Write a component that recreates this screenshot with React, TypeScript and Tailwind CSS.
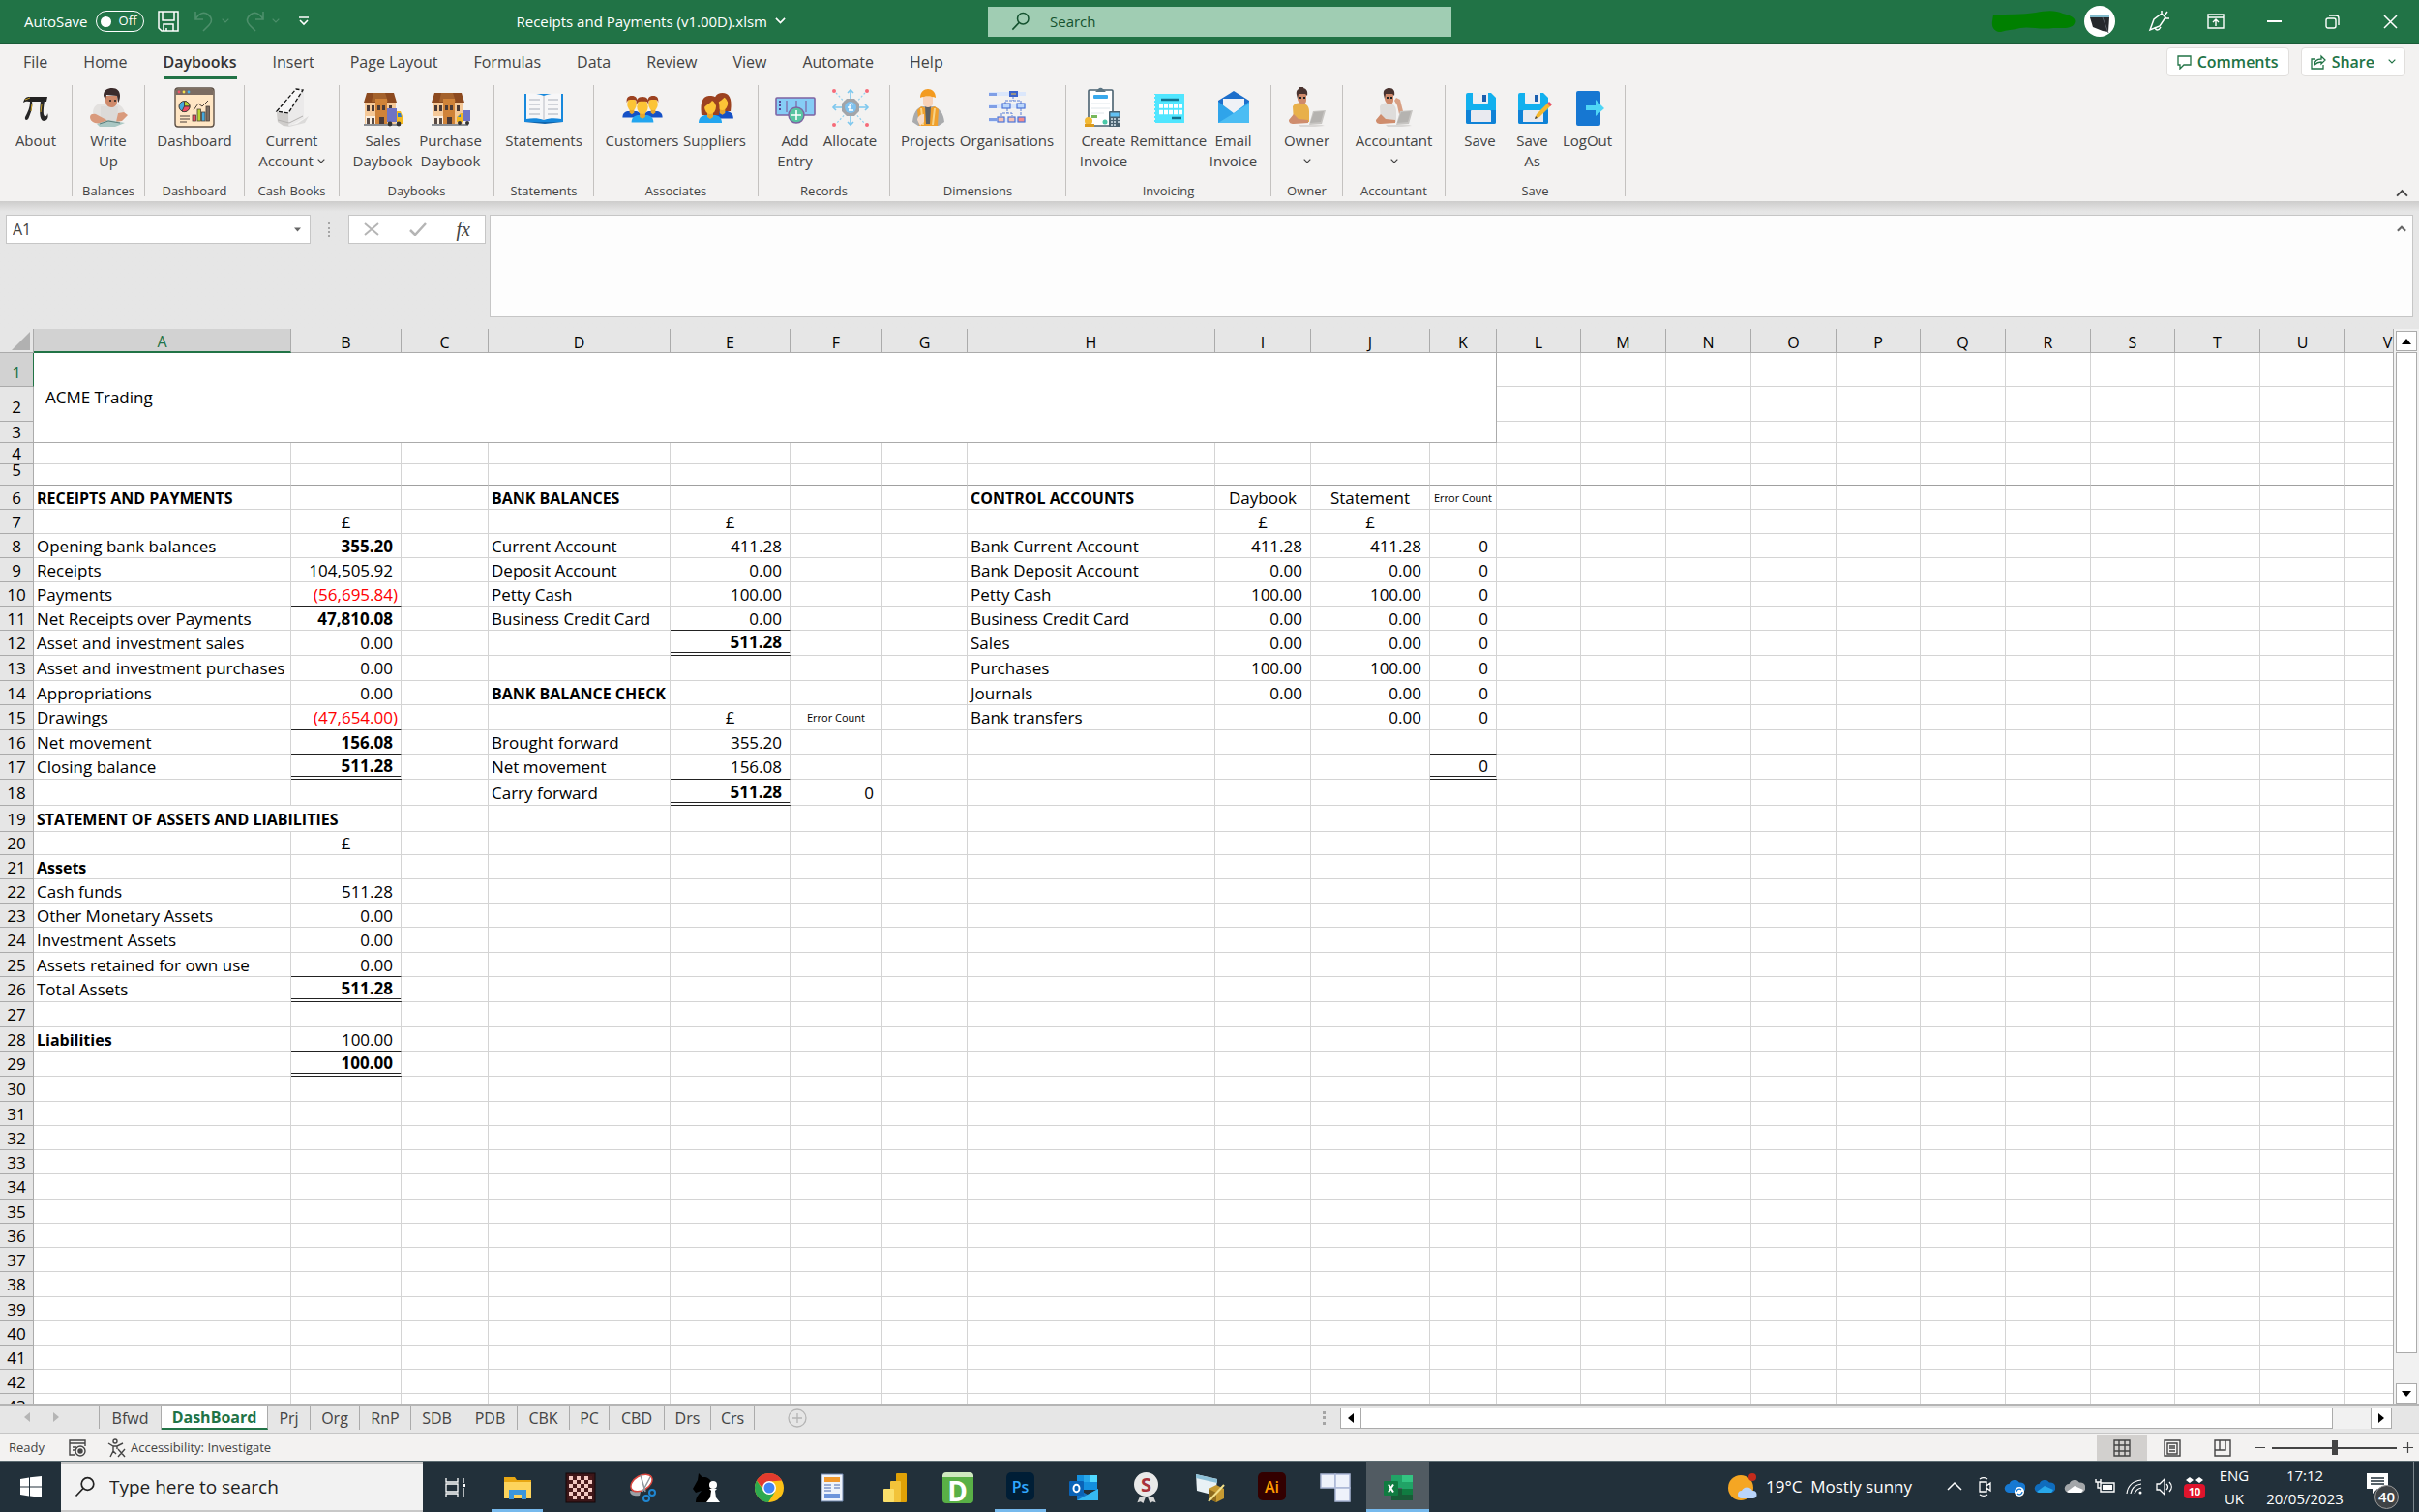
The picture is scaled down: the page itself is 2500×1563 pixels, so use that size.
import type { ReactNode } from 'react';
import clsx from 'clsx';

/* ---------- small glyphs ---------- */

function Chevron({ className, up }: { className?: string; up?: boolean }) {
  return (
    <svg viewBox="0 0 12 8" className={clsx('fill-none stroke-current', className)} strokeWidth="1.8">
      <path d={up ? 'M1 7l5-5 5 5' : 'M1 1l5 5 5-5'} />
    </svg>
  );
}

function Arrow({ dir, small }: { dir: 'up' | 'down' | 'left' | 'right'; small?: boolean }) {
  const d = { up: 'M5 2l5 6H0z', down: 'M0 2h10L5 8z', left: 'M8 0v10L2 5z', right: 'M2 0l6 5-6 5z' }[dir];
  return (
    <svg viewBox="0 0 10 10" className={clsx('fill-current', small ? 'size-[7px]' : 'size-[10px]')}>
      <path d={d} />
    </svg>
  );
}

function Magnifier({ className }: { className?: string }) {
  return (
    <svg viewBox="0 0 22 22" className={clsx('fill-none stroke-current', className)} strokeWidth="1.7">
      <circle cx="13.5" cy="8" r="6.3" />
      <path d="M9 12.5L1.5 20.5" />
    </svg>
  );
}

/* ---------- ribbon drawings, all on a 42 x 42 box ---------- */

function Pic({ children }: { children: ReactNode }) {
  return (
    <svg viewBox="0 0 42 42" className="size-[42px] shrink-0">
      {children}
    </svg>
  );
}

const PiIcon = () => (
  <Pic>
    <path d="M8 16c2-7 5-6 9-6h16l-1 5H17c-4 0-6-1-9 1z" fill="#222" />
    <path d="M17 14c1 8-1 12-3 17-1 4-5 4-4 0 3-6 5-9 5-17zM26 14h4c-1 7-2 14 0 16 2 1 3-1 3-3 2 5-1 8-4 8-5-1-4-12-3-21z" fill="#262626" />
    <path d="M10 13l5-2M17 17l-1 8M27 18l-1 8" stroke="#c9a227" strokeWidth="1" />
  </Pic>
);

const WriterIcon = () => (
  <Pic>
    <path d="M5 27c0-7 4-10 10-10h11c7 0 11 4 12 11l-4 3H9z" fill="#e3e1df" />
    <path d="M13 20h18l-1 15H13z" fill="#dcdad8" />
    <path d="M2 31c0-3 3-4 6-3l13 7-2 4-12-2c-3-1-5-3-5-6zM31 27l6-1 4 3-6 6-6 1z" fill="#d99a7c" />
    <path d="M18 9h12v6c0 4-3 6-6 6s-6-3-6-6z" fill="#cf8a6b" />
    <path d="M16 9c0-6 4-8 9-8s8 3 8 8c0 3-1 6-2 7l-1-7-11-1-1 5z" fill="#3a2b2b" />
    <path d="M22 14h2M27 14h2" stroke="#222" strokeWidth="1.500" />
    <path d="M9 38l12-4 17 3-10 4H12z" fill="#a9c7c3" />
    <path d="M12 38l9-3 12 2" stroke="#5e7f7c" fill="none" />
  </Pic>
);

const DashboardIcon = () => (
  <Pic>
    <rect x="1" y="1" width="40" height="40" rx="3" fill="#ffe6c4" stroke="#5d5147" strokeWidth="1.4" />
    <path d="M1.500 8V4a2.500 2.500 0 012.500-2.500h34A2.500 2.500 0 0140.500 4v4z" fill="#7b6c61" />
    <circle cx="5" cy="5" r="1.400" fill="#f25268" />
    <circle cx="10" cy="5" r="1.400" fill="#f3e04d" />
    <circle cx="15" cy="5" r="1.400" fill="#45b5e8" />
    <circle cx="10.500" cy="20" r="5.500" fill="#45a9dd" stroke="#4a3f38" />
    <path d="M10.500 20V14.500A5.500 5.500 0 0116 20z" fill="#b9d432" stroke="#4a3f38" />
    <path d="M10.500 20H16A5.500 5.500 0 018 25z" fill="#ef4b63" stroke="#4a3f38" />
    <rect x="19" y="29" width="3.500" height="6" fill="#ef4b63" stroke="#4a3f38" strokeWidth=".8" />
    <rect x="24" y="23" width="3.500" height="12" fill="#b9d432" stroke="#4a3f38" strokeWidth=".8" />
    <rect x="28.500" y="26" width="3.500" height="9" fill="#45a9dd" stroke="#4a3f38" strokeWidth=".8" />
    <rect x="33" y="20" width="3.500" height="15" fill="#7b6c61" stroke="#4a3f38" strokeWidth=".8" />
    <path d="M20 24l5-7 4 3 6-6M6 30h10M6 33h10M6 36h7" stroke="#4a3f38" fill="none" />
  </Pic>
);

const TillIcon = () => (
  <Pic>
    <path d="M12 41l14-3 12-8-4 7-16 4z" fill="#dcdbda" />
    <path d="M5 26L25 2l8 1v29l-15 8h-6l-6-4z" fill="#e2e1e0" />
    <path d="M5 26l12 2v12h-5l-6-4z" fill="#cfcdcb" />
    <path d="M17 28L33 4v28l-15 8z" fill="#ebeaea" />
    <path d="M5 25L25 2l7 1-15 24z" fill="#f7f7f7" stroke="#111" strokeWidth="1.300" strokeDasharray="4 2" />
    <path d="M6 34l12 3 14-7" stroke="#b3b1af" fill="none" />
  </Pic>
);

function ShopIcon({ small }: { small?: boolean }) {
  return (
    <Pic>
      <path d="M4 6h28l3 10H1z" fill="#8c4a1f" />
      <path d="M11 6h12l3 9H9z" fill="#a4622c" />
      <rect x="2" y="16" width="32" height="23" fill="#f5c998" />
      <rect x="13" y="12" width="12" height="27" fill="#d08338" />
      <path d="M4 19h3v6H4zM9 19h3v6H9zM15 19h3v5h-3zM20 19h3v5h-3zM27 19h3v6h-3zM17 31h5v8h-5z" fill="#4a3a36" />
      <path d="M3 30h10v8H3z" fill="#fbeede" />
      <path d="M4 32h3v6H4zM9 32h3v6H9z" fill="#584b45" />
      <path d="M1 38h38v2H1z" fill="#8b8f94" />
      {small ? (
        <g>
          <rect x="33" y="24" width="8" height="11" fill="#6f74c4" />
          <path d="M27 31l4-4h2v9h-6z" fill="#f3b91f" />
          <path d="M28 31l3-3v3z" fill="#2f79c8" />
          <circle cx="30" cy="37" r="2" fill="#333" />
          <circle cx="38" cy="37" r="2" fill="#333" />
        </g>
      ) : (
        <g>
          <rect x="25" y="22" width="10" height="14" fill="#6f74c4" />
          <path d="M35 25h4l2 5v8h-6z" fill="#f3b91f" />
          <path d="M36 27h3l1 4h-4z" fill="#2f79c8" />
          <circle cx="28" cy="38" r="2.400" fill="#333" />
          <circle cx="37" cy="38" r="2.400" fill="#333" />
        </g>
      )}
    </Pic>
  );
}

const BookIcon = () => (
  <Pic>
    <path d="M1 7h40v29H1z" fill="#1688dc" />
    <path d="M21 9c-5-2-12-3-18-2v26c6-1 13-1 18 1 5-2 12-2 18-1V7c-6-1-13 0-18 2z" fill="#f7f7f8" />
    <path d="M21 9v25" stroke="#b9bcc4" />
    <path d="M6 13h11M6 18h11M6 23h11M6 28h11M25 13h11M25 18h11M25 23h11M25 28h11" stroke="#c3c7ce" strokeWidth="1.400" />
    <path d="M1 36h40l-19 2z" fill="#0f65ad" />
  </Pic>
);

function Bust({ x, y, s, shirt, long }: { x: number; y: number; s: number; shirt: string; long?: boolean }) {
  return (
    <g transform={`translate(${x} ${y}) scale(${s})`}>
      {long && <path d="M1 20C-1 5 3 0 10 0s11 5 9 20z" fill="#9c4220" />}
      <path d="M-2 28c0-6 4-8 8-8h8c4 0 8 2 8 8z" fill={shirt} />
      <path d="M7 16h6v6l-3 2-3-2z" fill="#e8a62c" />
      <ellipse cx="10" cy="11" rx="6" ry="8" fill="#fcc436" />
      <path
        d={long ? 'M3 13C2 4 5 1 10 1s8 3 7 12c-1-4-3-7-5-8-2 3-6 4-9 8z' : 'M3.500 9C2.500 3 5 0 10 0s7.500 3 6.500 9C16 6 15 5 13 5H8C5 5 4 7 3.500 9z'}
        fill="#9c4220"
      />
    </g>
  );
}

const CustomersIcon = () => (
  <Pic>
    <Bust x={2} y={9} s={0.800} shirt="#1551c6" />
    <Bust x={24} y={9} s={0.800} shirt="#1551c6" />
    <Bust x={11.500} y={10} s={0.950} shirt="#22a5ef" />
  </Pic>
);

const SuppliersIcon = () => (
  <Pic>
    <Bust x={19} y={6} s={0.950} shirt="#1551c6" long />
    <Bust x={6} y={9} s={1} shirt="#22a5ef" long />
  </Pic>
);

const AddEntryIcon = () => (
  <Pic>
    <rect x="1" y="11" width="40" height="18" rx="1" fill="#86cdf6" stroke="#7e63a2" strokeWidth="1.600" />
    <path d="M12 14v12M22 14v12M32 14v12" stroke="#7e63a2" strokeWidth="1.200" />
    <path d="M5 14v12" stroke="#55489a" strokeWidth="2" strokeDasharray="2 2" />
    <circle cx="22" cy="29" r="8" fill="#57c4a1" stroke="#7e63a2" strokeWidth="1.400" />
    <path d="M22 24v10M17 29h10" stroke="#fff" strokeWidth="1.600" />
  </Pic>
);

const AllocateIcon = () => (
  <Pic>
    <path d="M6 6l30 32M36 6L6 38" stroke="#8fd0ef" strokeWidth="1.200" strokeDasharray="2 2" />
    <path d="M21 12V4M21 30v8M12 21H4M30 21h8" stroke="#7cc7ee" strokeWidth="1.600" />
    <path d="M18 6l3-3 3 3M18 36l3 3 3-3M6 18l-3 3 3 3M36 18l3 3-3 3" fill="none" stroke="#7cc7ee" strokeWidth="1.600" />
    <path d="M17 12h8l5 5v8l-5 5h-8l-5-5v-8z" fill="#a2a4a8" />
    <circle cx="21" cy="21" r="6" fill="#7fc1ee" />
    <path d="M24 18c-3-2-4 0-4 2v4h-1 5M18 21h4" stroke="#fff" fill="none" strokeWidth="1.300" />
    <g fill="#f66a78">
      <circle cx="4" cy="4" r="2" />
      <circle cx="38" cy="4" r="2" />
      <circle cx="4" cy="39" r="2" />
      <circle cx="38" cy="39" r="2" />
    </g>
  </Pic>
);

const ProjectsIcon = () => (
  <Pic>
    <path d="M5 36c1-9 4-14 10-16h12c6 2 10 7 11 16l-6 4H11z" fill="#a9abad" />
    <path d="M14 20l7 3 7-3 4 3-1 17H12l-2-16z" fill="#f0a02c" />
    <path d="M18 20h6l-1 18h-4z" fill="#5b6066" />
    <path d="M14 22l2 17M28 22l-2 17" stroke="#f7d48a" strokeWidth="2" />
    <path d="M16 10h10v8c-2 4-8 4-10 0z" fill="#f8d2b8" />
    <path d="M13 11c0-6 4-9 8-9s8 3 8 9c-5-2-11-2-16 0z" fill="#f39a1f" />
    <path d="M10 34c0-3 3-6 7-6v8l-4 4z" fill="#f6dcc8" />
  </Pic>
);

const OrganisationsIcon = () => (
  <Pic>
    <path d="M2 5h38v4H2zM2 18h38v4H2zM2 32h38v4H2z" fill="#dbe7fb" />
    <path d="M2 6h8v3H2zM2 19h8v3H2zM2 32h8v3H2z" fill="#7f9fe6" />
    <path d="M27 9v5M19 18v-4h16v4M21 22v5M15 30v-3h11v3M35 22v8" fill="none" stroke="#5b7fd6" strokeDasharray="3 1" />
    <rect x="23" y="4" width="9" height="6" fill="#3a63cc" />
    <path d="M25 7h5" stroke="#f5c445" />
    <g stroke="#4c74d8" strokeWidth="1.200">
      <rect x="16" y="17" width="8" height="5" fill="#bcd7fb" />
      <rect x="31" y="17" width="8" height="5" fill="#bcd7fb" />
      <rect x="11" y="31" width="7" height="5" fill="#f8c3b4" />
      <rect x="22" y="31" width="7" height="5" fill="#f8c3b4" />
      <rect x="32" y="31" width="7" height="5" fill="#f48d8d" />
    </g>
  </Pic>
);

const InvoiceIcon = () => (
  <Pic>
    <rect x="5" y="3" width="25" height="37" rx="1" fill="#fff" stroke="#4a6270" strokeWidth="1.600" />
    <path d="M12 5l3-3a3 3 0 015 0l3 3z" fill="#5b7583" />
    <rect x="10" y="8" width="15" height="4" rx="1" fill="#39a9ec" />
    <path d="M8 17h19M8 22h19M8 27h13" stroke="#dfe6ea" />
    <rect x="8" y="29" width="6" height="3" fill="#76b85c" />
    <circle cx="5" cy="35" r="4" fill="#f2b934" />
    <path d="M1 38h10v3H1z" fill="#dc9b1d" />
    <circle cx="22" cy="36" r="2.500" fill="#49c8a7" />
    <rect x="26" y="25" width="12" height="16" rx="1" fill="#4a6270" />
    <rect x="27.500" y="26.500" width="9" height="4" fill="#63c1f2" />
    <path d="M28 33h2M31 33h2M35 33h2M28 36h2M31 36h2M35 36h2M28 39h2M31 39h2" stroke="#d9e6ed" strokeWidth="1.600" />
  </Pic>
);

const RemittanceIcon = () => (
  <Pic>
    <path d="M6 7h31v30H6z" fill="#50e6ff" />
    <path d="M6 8v29" stroke="#f3f2f1" strokeWidth="2" strokeDasharray="2 2" />
    <path d="M13 13h18M24 32h10" stroke="#11738f" strokeWidth="2.400" />
    <path d="M11 19.500h24M11 26h24" stroke="#fff" strokeWidth="4.500" strokeDasharray="4 1" />
  </Pic>
);

const EmailIcon = () => (
  <Pic>
    <path d="M5 14L21 4l16 10v20H5z" fill="#1d6fcb" />
    <path d="M10 12h22v18H10z" fill="#eff1f6" />
    <path d="M5 15l16 12 16-12v22H5z" fill="#2fa4ea" />
    <path d="M5 37l32-20v20z" fill="#4bbdf3" />
  </Pic>
);

function LaptopPerson({ shirt, seated }: { shirt: string; seated?: boolean }) {
  return (
    <Pic>
      <path d="M6 20c2-4 6-4 10-3 5 0 7 4 7 8v11H7z" fill={shirt} />
      <path d="M7 28l-5 6c0 3 2 4 5 4l15-1v-3l-10-1z" fill="#cf8d6d" />
      <path d="M11 6h9v7c0 4-2 5-4 5s-5-3-5-6z" fill="#cf8a6b" />
      <path d="M10 8c-1-5 2-7 6-7s6 3 5 8l-2-2h-7l-1 5z" fill="#49332f" />
      {seated && <path d="M21 14l2-3 4 2 3 12-4 3-2-9z" fill="#d8a084" />}
      {!seated && <circle cx="15" cy="2" r="2.500" fill="#49332f" />}
      <path d="M27 25l13-1-4 14-13 1z" fill="#c7c5c2" />
      <path d="M28 26l10-1-3 11-11 1z" fill="#b5b3b0" />
      <path d="M12 39h24l3 1-10 1H14z" fill="#d9d7d5" />
      <path d="M13 11h2M17 11h2" stroke="#222" strokeWidth="2" />
    </Pic>
  );
}

const FloppyShape = () => (
  <>
    <path d="M8 6h24l5 5v25a2 2 0 01-2 2H8a2 2 0 01-2-2V8a2 2 0 012-2z" fill="#12b0ee" />
    <path d="M6 24h31v12a2 2 0 01-2 2H8a2 2 0 01-2-2z" fill="#0f82d6" />
    <path d="M13 6h16v10a2 2 0 01-2 2H15a2 2 0 01-2-2z" fill="#eef0f4" />
    <path d="M23 8h4v7h-4z" fill="#1b5fae" />
    <path d="M12 24h19a1 1 0 011 1v11H11V25a1 1 0 011-1z" fill="#e9eaf0" />
  </>
);

const FloppyIcon = () => (
  <Pic>
    <FloppyShape />
  </Pic>
);

const FloppyPenIcon = () => (
  <Pic>
    <FloppyShape />
    <path d="M23 33l2-5 12-12 3 3-12 12z" fill="#f5b82e" />
    <path d="M23 33l1-3 2 2z" fill="#444" />
    <path d="M36 17l2-2 3 3-2 2z" fill="#e8506a" />
  </Pic>
);

const LogOutIcon = () => (
  <Pic>
    <rect x="9" y="4" width="25" height="36" rx="2" fill="#1677d2" />
    <path d="M19 19h10v-6l9 9-9 8v-6H19z" fill="#4fd6f6" />
  </Pic>
);

/* ---------- ribbon ---------- */

type RibbonButton = { label: string; second?: string; menu?: boolean; width: string; icon: ReactNode };
type RibbonGroup = { name: string; width: string; buttons: RibbonButton[] };

const GROUPS: RibbonGroup[] = [
  { name: '', width: 'w-[75px]', buttons: [{ label: 'About', width: 'w-[60px]', icon: <PiIcon /> }] },
  { name: 'Balances', width: 'w-[75px]', buttons: [{ label: 'Write', second: 'Up', width: 'w-[60px]', icon: <WriterIcon /> }] },
  { name: 'Dashboard', width: 'w-[103px]', buttons: [{ label: 'Dashboard', width: 'w-[90px]', icon: <DashboardIcon /> }] },
  { name: 'Cash Books', width: 'w-[98px]', buttons: [{ label: 'Current', second: 'Account', menu: true, width: 'w-[90px]', icon: <TillIcon /> }] },
  {
    name: 'Daybooks',
    width: 'w-[160px]',
    buttons: [
      { label: 'Sales', second: 'Daybook', width: 'w-[70px]', icon: <ShopIcon /> },
      { label: 'Purchase', second: 'Daybook', width: 'w-[70px]', icon: <ShopIcon small /> },
    ],
  },
  { name: 'Statements', width: 'w-[103px]', buttons: [{ label: 'Statements', width: 'w-[90px]', icon: <BookIcon /> }] },
  {
    name: 'Associates',
    width: 'w-[170px]',
    buttons: [
      { label: 'Customers', width: 'w-[80px]', icon: <CustomersIcon /> },
      { label: 'Suppliers', width: 'w-[70px]', icon: <SuppliersIcon /> },
    ],
  },
  {
    name: 'Records',
    width: 'w-[136px]',
    buttons: [
      { label: 'Add', second: 'Entry', width: 'w-[54px]', icon: <AddEntryIcon /> },
      { label: 'Allocate', width: 'w-[60px]', icon: <AllocateIcon /> },
    ],
  },
  {
    name: 'Dimensions',
    width: 'w-[182px]',
    buttons: [
      { label: 'Projects', width: 'w-[60px]', icon: <ProjectsIcon /> },
      { label: 'Organisations', width: 'w-[103px]', icon: <OrganisationsIcon /> },
    ],
  },
  {
    name: 'Invoicing',
    width: 'w-[212px]',
    buttons: [
      { label: 'Create', second: 'Invoice', width: 'w-[54px]', icon: <InvoiceIcon /> },
      { label: 'Remittance', width: 'w-[80px]', icon: <RemittanceIcon /> },
      { label: 'Email', second: 'Invoice', width: 'w-[54px]', icon: <EmailIcon /> },
    ],
  },
  { name: 'Owner', width: 'w-[74px]', buttons: [{ label: 'Owner', menu: true, width: 'w-[60px]', icon: <LaptopPerson shirt="#e8b04a" /> }] },
  { name: 'Accountant', width: 'w-[106px]', buttons: [{ label: 'Accountant', menu: true, width: 'w-[90px]', icon: <LaptopPerson shirt="#dedcda" seated /> }] },
  {
    name: 'Save',
    width: 'w-[186px]',
    buttons: [
      { label: 'Save', width: 'w-[54px]', icon: <FloppyIcon /> },
      { label: 'Save', second: 'As', width: 'w-[54px]', icon: <FloppyPenIcon /> },
      { label: 'LogOut', width: 'w-[60px]', icon: <LogOutIcon /> },
    ],
  },
];

const MENU_TABS = ['File', 'Home', 'Daybooks', 'Insert', 'Page Layout', 'Formulas', 'Data', 'Review', 'View', 'Automate', 'Help'];

function TitleBar() {
  return (
    <header className="flex h-[46px] shrink-0 items-center border-b-2 border-[#1a5c38] bg-[#217346] text-white">
      <div className="flex flex-1 items-center pl-[25px]">
        <label className="flex items-center gap-2 text-[15px]">
          AutoSave
          <input type="checkbox" className="sr-only" />
          <span className="flex h-[22px] w-[50px] items-center gap-2 rounded-full border border-white pl-1 text-[13px]">
            <span className="size-[11px] rounded-full bg-white" />
            Off
          </span>
        </label>
        <button aria-label="Save" className="ml-[14px]">
          <svg viewBox="0 0 22 22" className="size-[22px] fill-none stroke-current" strokeWidth="1.5">
            <path d="M1 1h20v20H4l-3-3zM5 1v9h12V1M6 21v-7h10v7M9 21v-3" />
          </svg>
        </button>
        <button aria-label="Undo" className="ml-4 flex items-center gap-2 text-[#4d8f6b]">
          <svg viewBox="0 0 20 22" className="h-[22px] w-[20px] fill-none stroke-current" strokeWidth="1.6">
            <path d="M1 1v8h8M1 9c4-7 9-8 13-5s5 7 1 11l-6 6" />
          </svg>
          <Chevron className="w-[8px]" />
        </button>
        <button aria-label="Redo" className="ml-4 flex items-center gap-2 text-[#4d8f6b]">
          <svg viewBox="0 0 20 22" className="h-[22px] w-[20px] fill-none stroke-current" strokeWidth="1.6">
            <path d="M19 1v8h-8M19 9C15 2 10 1 6 4S1 11 5 15l6 6" />
          </svg>
          <Chevron className="w-[8px]" />
        </button>
        <button aria-label="Customize Quick Access Toolbar" className="ml-5">
          <svg viewBox="0 0 10 10" className="size-[10px] fill-none stroke-current" strokeWidth="1.6">
            <path d="M0 1h10M1 4l4 4 4-4" />
          </svg>
        </button>
        <button className="mr-[191px] ml-auto flex items-center gap-2 text-[15px]">
          Receipts and Payments (v1.00D).xlsm
          <Chevron className="w-[11px]" />
        </button>
      </div>
      <label className="ml-[18px] flex h-[31px] w-[479px] items-center gap-5 bg-[#a0cdb3] pl-6 text-[#14522f]">
        <Magnifier className="size-[20px]" />
        <input type="search" aria-label="Search" placeholder="Search" className="flex-1 bg-transparent text-[15px] outline-none placeholder:text-[#14522f]" />
      </label>
      <div className="flex flex-1 items-center justify-end pr-[22px]">
        <svg viewBox="0 0 88 22" className="mr-2 h-[22px] w-[88px] fill-[#008000]">
          <path d="M2 4c16 0 30 0 44-2C56 0 66-1 74 3c10 2 14 6 12 10-2 6-12 5-22 5-14 2-24-2-34 0-8 2-14 2-20 4C3 22 0 17 1 11z" />
        </svg>
        <svg viewBox="0 0 32 32" className="mr-[34px] size-[32px]">
          <circle cx="16" cy="16" r="16" fill="#fff" />
          <path d="M6 12l13-1 7 1-1 15-6-1-10-4z" fill="#26282c" />
          <path d="M19 12l6 16" stroke="#5a5e66" />
          <path d="M6 11h20" stroke="#7fb8c9" strokeWidth="2" />
        </svg>
        <button aria-label="Coming soon" className="mr-[39px]">
          <svg viewBox="0 0 22 22" className="size-[22px] fill-none stroke-current" strokeWidth="1.5">
            <path d="M2 20l4-11 8-6 4 4-6 9zM7 17c1 4 4 4 6 0M14 4V0M17 5l3-4M18 8h4" />
          </svg>
        </button>
        <button aria-label="Ribbon display options" className="mr-[44px]">
          <svg viewBox="0 0 18 16" className="h-4 w-[18px] fill-none stroke-current" strokeWidth="1.4">
            <path d="M1 1h16v14H1zM1 4h16M9 13V6M6 9l3-3 3 3" />
          </svg>
        </button>
        <button aria-label="Minimize" className="mr-[45px] h-[2px] w-[15px] bg-white" />
        <button aria-label="Restore" className="mr-[45px]">
          <svg viewBox="0 0 15 15" className="size-[15px] fill-none stroke-current" strokeWidth="1.4">
            <rect x="1" y="4" width="10" height="10" rx="2" />
            <path d="M4 1h7a3 3 0 013 3v7" />
          </svg>
        </button>
        <button aria-label="Close">
          <svg viewBox="0 0 15 15" className="size-[15px] fill-none stroke-current" strokeWidth="1.5">
            <path d="M1 1l13 13M14 1L1 14" />
          </svg>
        </button>
      </div>
    </header>
  );
}

function Ribbon() {
  return (
    <section className="flex h-[162px] shrink-0 flex-col bg-[#f3f2f1] text-[#444]">
      <nav className="flex h-[42px] shrink-0 items-start pt-[2px] pr-[14px] pl-6">
        <div className="flex gap-[37px] text-base">
          {MENU_TABS.map((tab) => (
            <button
              key={tab}
              className={clsx(
                'h-[34px] border-b-[3px] pt-px leading-6',
                tab === 'Daybooks' ? 'border-[#217346] font-semibold text-[#333]' : 'border-transparent',
              )}
            >
              {tab}
            </button>
          ))}
        </div>
        <button className="mt-px ml-auto flex h-[30px] items-center gap-[6px] rounded-sm border border-[#e1dfdd] bg-white px-[10px] text-base font-semibold text-[#217346]">
          <svg viewBox="0 0 15 15" className="size-[15px] fill-none stroke-current" strokeWidth="1.3">
            <path d="M1 1h13v9H7l-4 4v-4H1z" />
          </svg>
          Comments
        </button>
        <button className="mt-px ml-3 flex h-[30px] items-center gap-[6px] rounded-sm border border-[#e1dfdd] bg-white px-[9px] text-base font-semibold text-[#217346]">
          <svg viewBox="0 0 16 16" className="size-4 fill-none stroke-current" strokeWidth="1.3">
            <path d="M5 5H1v10h12v-4M4 11c0-4 3-6 7-6V2l4 4-4 4V8c-3 0-5 1-7 3z" />
          </svg>
          Share
          <Chevron className="ml-2 w-[8px]" />
        </button>
      </nav>
      <div className="flex flex-1 items-start">
        {GROUPS.map((group, i) => (
          <div key={i} className={clsx('flex h-[115px] shrink-0 flex-col items-center border-r border-[#c4c2c0]', group.width)}>
            <div className="flex flex-1 justify-center pt-[2px]">
              {group.buttons.map((b, n) => (
                <button key={n} className={clsx('flex flex-col items-center text-[15px] leading-[21px] whitespace-nowrap', b.width)}>
                  {b.icon}
                  <span className="mt-[3px]">{b.label}</span>
                  <span className="flex min-h-[21px] items-center gap-1">
                    {b.second}
                    {b.menu && <Chevron className="w-[8px]" />}
                  </span>
                </button>
              ))}
            </div>
            <span className="h-3 text-[13px] leading-3">{group.name}</span>
          </div>
        ))}
        <button aria-label="Collapse the ribbon" className="mr-[11px] ml-auto self-end pb-1">
          <Chevron up className="w-[13px]" />
        </button>
      </div>
    </section>
  );
}

function FormulaBar() {
  return (
    <section className="flex h-[132px] shrink-0 items-start bg-linear-to-b from-[#cdcccb] to-[#e6e6e6] to-8% pt-[14px] pr-[6px] pl-[6px]">
      <div className="flex h-[30px] w-[315px] items-center border border-[#c6c6c6] bg-white pr-[9px] text-[#666]">
        <input aria-label="Name Box" defaultValue="A1" className="min-w-0 flex-1 px-[6px] text-base text-[#444] outline-none" />
        <Arrow dir="down" small />
      </div>
      <span className="mt-2 ml-[18px] h-[15px] w-0 border-l-2 border-dotted border-[#a5a5a5]" />
      <div className="ml-[19px] flex h-[30px] w-[142px] items-center justify-between border border-[#c6c6c6] bg-white px-[15px]">
        <button aria-label="Cancel">
          <svg viewBox="0 0 16 14" className="h-[14px] w-4 fill-none stroke-[#b5b5b5]" strokeWidth="2">
            <path d="M1 1l14 12M15 1L1 13" />
          </svg>
        </button>
        <button aria-label="Enter">
          <svg viewBox="0 0 18 14" className="h-[14px] w-[18px] fill-none stroke-[#b5b5b5]" strokeWidth="2.5">
            <path d="M1 8l5 5L17 1" />
          </svg>
        </button>
        <button className="font-['Liberation_Serif',serif] text-[20px] leading-6 text-[#444] italic">fx</button>
      </div>
      <div className="ml-1 flex h-[106px] flex-1 border border-[#c6c6c6] bg-[#fdfdfd]">
        <textarea aria-label="Formula bar" className="h-full flex-1 resize-none outline-none" />
        <button aria-label="Collapse formula bar" className="mt-[10px] mr-[6px] self-start text-[#666]">
          <Chevron up className="w-[10px] stroke-[2.5]" />
        </button>
      </div>
    </section>
  );
}

/* ---------- worksheet ---------- */

const COLUMNS = [
  { name: 'A', width: 'w-[266px]' },
  { name: 'B', width: 'w-[114px]' },
  { name: 'C', width: 'w-[90px]' },
  { name: 'D', width: 'w-[188px]' },
  { name: 'E', width: 'w-[124px]' },
  { name: 'F', width: 'w-[95px]' },
  { name: 'G', width: 'w-[88px]' },
  { name: 'H', width: 'w-[256px]' },
  { name: 'I', width: 'w-[99px]' },
  { name: 'J', width: 'w-[123px]' },
  { name: 'K', width: 'w-[69px]' },
  { name: 'L', width: 'w-[87px]' },
  { name: 'M', width: 'w-[88px]' },
  { name: 'N', width: 'w-[88px]' },
  { name: 'O', width: 'w-[88px]' },
  { name: 'P', width: 'w-[87px]' },
  { name: 'Q', width: 'w-[88px]' },
  { name: 'R', width: 'w-[88px]' },
  { name: 'S', width: 'w-[87px]' },
  { name: 'T', width: 'w-[88px]' },
  { name: 'U', width: 'w-[88px]' },
  { name: 'V', width: 'w-[88px]' },
];

const ROW_HEIGHTS: Record<number, string> = {
  1: 'h-[35px]',
  2: 'h-[36px]',
  3: 'h-[22px]',
  4: 'h-[22px]',
  5: 'h-[22px]',
  12: 'h-[26px]',
  13: 'h-[26px]',
  15: 'h-[26px]',
  17: 'h-[26px]',
  18: 'h-[27px]',
  19: 'h-[27px]',
  20: 'h-[24px]',
  24: 'h-[26px]',
  26: 'h-[26px]',
  27: 'h-[26px]',
  29: 'h-[26px]',
  30: 'h-[26px]',
  34: 'h-[26px]',
  38: 'h-[26px]',
};

const LABEL = 'text-left px-[3px]';
const HEADING = 'text-left px-[3px] text-base leading-5 font-bold';
const MONEY = 'text-right pr-2';
const TOTAL = 'text-right pr-2 font-bold';
const NEGATIVE = 'text-right pr-[3px] text-[#ff0000]';
const CENTER = 'text-center';
const NOTE = 'text-center text-[11px]';

const CELLS: Record<string, [string, string]> = {
  A6: ['RECEIPTS AND PAYMENTS', HEADING],
  B7: ['£', CENTER],
  A8: ['Opening bank balances', LABEL],
  B8: ['355.20', TOTAL],
  A9: ['Receipts', LABEL],
  B9: ['104,505.92', MONEY],
  A10: ['Payments', LABEL],
  B10: ['(56,695.84)', NEGATIVE],
  A11: ['Net Receipts over Payments', LABEL],
  B11: ['47,810.08', TOTAL],
  A12: ['Asset and investment sales', LABEL],
  B12: ['0.00', MONEY],
  A13: ['Asset and investment purchases', LABEL],
  B13: ['0.00', MONEY],
  A14: ['Appropriations', LABEL],
  B14: ['0.00', MONEY],
  A15: ['Drawings', LABEL],
  B15: ['(47,654.00)', NEGATIVE],
  A16: ['Net movement', LABEL],
  B16: ['156.08', TOTAL],
  A17: ['Closing balance', LABEL],
  B17: ['511.28', TOTAL],
  A19: ['STATEMENT OF ASSETS AND LIABILITIES', HEADING],
  B20: ['£', CENTER],
  A21: ['Assets', HEADING],
  A22: ['Cash funds', LABEL],
  B22: ['511.28', MONEY],
  A23: ['Other Monetary Assets', LABEL],
  B23: ['0.00', MONEY],
  A24: ['Investment Assets', LABEL],
  B24: ['0.00', MONEY],
  A25: ['Assets retained for own use', LABEL],
  B25: ['0.00', MONEY],
  A26: ['Total Assets', LABEL],
  B26: ['511.28', TOTAL],
  A28: ['Liabilities', HEADING],
  B28: ['100.00', MONEY],
  B29: ['100.00', TOTAL],

  D6: ['BANK BALANCES', HEADING],
  E7: ['£', CENTER],
  D8: ['Current Account', LABEL],
  E8: ['411.28', MONEY],
  D9: ['Deposit Account', LABEL],
  E9: ['0.00', MONEY],
  D10: ['Petty Cash', LABEL],
  E10: ['100.00', MONEY],
  D11: ['Business Credit Card', LABEL],
  E11: ['0.00', MONEY],
  E12: ['511.28', TOTAL],
  D14: ['BANK BALANCE CHECK', HEADING],
  E15: ['£', CENTER],
  F15: ['Error Count', NOTE],
  D16: ['Brought forward', LABEL],
  E16: ['355.20', MONEY],
  D17: ['Net movement', LABEL],
  E17: ['156.08', MONEY],
  D18: ['Carry forward', LABEL],
  E18: ['511.28', TOTAL],
  F18: ['0', MONEY],

  H6: ['CONTROL ACCOUNTS', HEADING],
  I6: ['Daybook', CENTER],
  J6: ['Statement', CENTER],
  K6: ['Error Count', NOTE],
  I7: ['£', CENTER],
  J7: ['£', CENTER],
  H8: ['Bank Current Account', LABEL],
  I8: ['411.28', MONEY],
  J8: ['411.28', MONEY],
  K8: ['0', MONEY],
  H9: ['Bank Deposit Account', LABEL],
  I9: ['0.00', MONEY],
  J9: ['0.00', MONEY],
  K9: ['0', MONEY],
  H10: ['Petty Cash', LABEL],
  I10: ['100.00', MONEY],
  J10: ['100.00', MONEY],
  K10: ['0', MONEY],
  H11: ['Business Credit Card', LABEL],
  I11: ['0.00', MONEY],
  J11: ['0.00', MONEY],
  K11: ['0', MONEY],
  H12: ['Sales', LABEL],
  I12: ['0.00', MONEY],
  J12: ['0.00', MONEY],
  K12: ['0', MONEY],
  H13: ['Purchases', LABEL],
  I13: ['100.00', MONEY],
  J13: ['100.00', MONEY],
  K13: ['0', MONEY],
  H14: ['Journals', LABEL],
  I14: ['0.00', MONEY],
  J14: ['0.00', MONEY],
  K14: ['0', MONEY],
  H15: ['Bank transfers', LABEL],
  J15: ['0.00', MONEY],
  K15: ['0', MONEY],
  K17: ['0', MONEY],
};

const SINGLE_LINE = ['B10', 'B15', 'B16', 'B25', 'B28', 'E11', 'E17', 'K16'];
const DOUBLE_LINE = ['B17', 'B26', 'B29', 'E12', 'E18', 'K17'];

function cellBorder(id: string, row: number) {
  if (SINGLE_LINE.includes(id)) return 'border-b pt-px border-b-[#222]';
  if (DOUBLE_LINE.includes(id)) return 'border-b-4 pt-[2px] border-double border-b-[#222]';
  if (row === 5) return 'border-b border-b-[#a0a0a0]';
  return 'border-b pt-px border-b-[#d4d4d4]';
}

function Worksheet() {
  return (
    <div className="min-w-0 flex-1 overflow-hidden border-r border-[#ababab] bg-white">
      <table className="w-[2512px] table-fixed border-separate border-spacing-0 text-[17px] leading-5 whitespace-nowrap text-black">
        <colgroup>
          <col className="w-[35px]" />
          {COLUMNS.map((c) => (
            <col key={c.name} className={c.width} />
          ))}
        </colgroup>
        <thead>
          <tr className="h-[25px] bg-[#e6e6e6] text-base leading-5">
            <th className="border-r border-b border-[#ababab] p-0 align-bottom">
              <svg viewBox="0 0 20 20" className="mb-[2px] ml-3 size-[19px] fill-[#b1b1b1]">
                <path d="M20 0v20H0z" />
              </svg>
            </th>
            {COLUMNS.map((c) => (
              <th
                key={c.name}
                className={clsx(
                  'border-r px-0 pt-[3px] pb-0 font-normal',
                  c.name === 'A' ? 'border-b-2 border-r-[#ababab] border-b-[#217346] bg-[#d2d2d2] text-[#217346]' : 'border-b border-[#ababab]',
                )}
              >
                {c.name}
              </th>
            ))}
          </tr>
        </thead>
        <tbody>
          {Array.from({ length: 43 }, (_, i) => i + 1).map((row) => (
            <tr key={row} className={ROW_HEIGHTS[row] ?? 'h-[25px]'}>
              <th
                className={clsx(
                  'border-r border-b px-0 font-normal',
                  row === 1 ? 'border-r-[#217346] border-b-[#ababab] bg-[#d2d2d2] text-[#217346]' : 'border-[#ababab] bg-[#e6e6e6]',
                  row < 3 && 'pb-1 align-bottom',
                  row > 5 && 'pt-px pb-0',
                  (row === 3 || row === 4) && 'py-0 leading-[18px]',
                  row === 5 && 'py-0 align-top leading-3',
                )}
              >
                {row}
              </th>
              {COLUMNS.map((c) => {
                const id = `${c.name}${row}`;
                if (row <= 3 && c.name <= 'K') {
                  return id === 'A1' ? (
                    <td key={id} colSpan={11} rowSpan={3} className="border-r border-b border-[#ababab] px-3 py-0">
                      ACME Trading
                    </td>
                  ) : null;
                }
                if (id === 'B19') return null;
                const [text, style] = CELLS[id] ?? ['', ''];
                return (
                  <td key={id} colSpan={id === 'A19' ? 2 : 1} className={clsx('border-r border-r-[#d4d4d4] pb-0', style || 'px-0', cellBorder(id, row))}>
                    {text}
                  </td>
                );
              })}
            </tr>
          ))}
        </tbody>
      </table>
    </div>
  );
}

function VerticalScroll() {
  return (
    <div className="flex w-[26px] shrink-0 flex-col bg-[#f1f1f1] px-[2px] text-black">
      <button aria-label="Scroll up" className="mt-[2px] flex h-[21px] items-center justify-center border border-[#ababab] bg-white">
        <Arrow dir="up" />
      </button>
      <div className="mt-px mb-[31px] flex-1 border border-[#ababab] bg-white" />
      <button aria-label="Scroll down" className="flex h-[21px] items-center justify-center border border-[#ababab] bg-white">
        <Arrow dir="down" />
      </button>
    </div>
  );
}

const SHEETS = [
  { name: 'Bfwd', width: 'w-[64px]' },
  { name: 'DashBoard', width: 'w-[110px]' },
  { name: 'Prj', width: 'w-[44px]' },
  { name: 'Org', width: 'w-[51px]' },
  { name: 'RnP', width: 'w-[53px]' },
  { name: 'SDB', width: 'w-[54px]' },
  { name: 'PDB', width: 'w-[56px]' },
  { name: 'CBK', width: 'w-[54px]' },
  { name: 'PC', width: 'w-[41px]' },
  { name: 'CBD', width: 'w-[57px]' },
  { name: 'Drs', width: 'w-[48px]' },
  { name: 'Crs', width: 'w-[45px]' },
];

function SheetTabs() {
  return (
    <nav className="flex h-[31px] shrink-0 items-start border-t-2 border-b border-t-[#b5b5b5] border-b-[#c6c6c6] bg-[#e6e6e6] text-base text-[#444]">
      <div className="flex h-6 w-[103px] items-center gap-[20px] border-r border-[#ababab] pl-[23px] text-[#b5b5b5]">
        <Arrow dir="left" />
        <Arrow dir="right" />
      </div>
      {SHEETS.map((s) => (
        <button
          key={s.name}
          className={clsx(
            'h-[25px] border-r border-[#ababab] leading-[22px]',
            s.width,
            s.name === 'DashBoard' && 'border-b-2 border-b-[#217346] bg-white font-bold text-[#217346]',
          )}
        >
          {s.name}
        </button>
      ))}
      <button aria-label="New sheet" className="mt-[3px] ml-[34px] text-[#b5b5b5]">
        <svg viewBox="0 0 20 20" className="size-[20px] fill-none stroke-current" strokeWidth="1.3">
          <circle cx="10" cy="10" r="9" />
          <path d="M10 5v10M5 10h10" />
        </svg>
      </button>
      <span className="mt-[6px] ml-auto h-[14px] border-l-[3px] border-dotted border-[#a5a5a5]" />
      <div className="mt-[2px] mr-[28px] ml-[15px] flex h-[22px] w-[1087px] bg-[#f1f1f1] text-black">
        <button aria-label="Scroll left" className="flex w-[22px] items-center justify-center border border-[#ababab] bg-white">
          <Arrow dir="left" />
        </button>
        <div className="mr-[39px] flex-1 border border-l-0 border-[#ababab] bg-white" />
        <button aria-label="Scroll right" className="flex w-[22px] items-center justify-center border border-[#ababab] bg-white">
          <Arrow dir="right" />
        </button>
      </div>
    </nav>
  );
}

function StatusBar() {
  return (
    <footer className="flex h-[28px] shrink-0 items-center bg-[#f3f2f1] pt-px pl-[9px] text-[13px] text-[#444]">
      <span>Ready</span>
      <button aria-label="Record macro" className="ml-[25px]">
        <svg viewBox="0 0 18 18" className="size-[18px] fill-none stroke-current" strokeWidth="1.4">
          <path d="M7 16H1V1h16v6M1 4h16M4 8h4M4 11h2" />
          <circle cx="12" cy="12" r="5" />
          <circle cx="12" cy="12" r="2" className="fill-current" />
        </svg>
      </button>
      <button className="ml-[22px] flex items-center gap-1">
        <svg viewBox="0 0 20 20" className="size-[20px] fill-none stroke-current" strokeWidth="1.4">
          <circle cx="8" cy="3" r="2" />
          <path d="M1 5l5 3h4l6-3M6 8v5l-3 6M10 8v3M6 13l3 3M11 11l7 8M18 11l-7 8" />
        </svg>
        Accessibility: Investigate
      </button>
      <div className="ml-auto flex h-full">
        <button aria-label="Normal view" className="flex w-[52px] items-center justify-center bg-[#d2d0ce]">
          <svg viewBox="0 0 18 18" className="size-[18px] fill-none stroke-current" strokeWidth="1.4">
            <path d="M1 1h16v16H1zM1 6h16M1 12h16M6 1v16M12 1v16" />
          </svg>
        </button>
        <button aria-label="Page layout view" className="flex w-[52px] items-center justify-center">
          <svg viewBox="0 0 18 18" className="size-[18px] fill-none stroke-current" strokeWidth="1.4">
            <path d="M1 1h16v16H1zM4 4h10v11H4zM6 7h6M6 9h6M6 12h6" />
          </svg>
        </button>
        <button aria-label="Page break preview" className="flex w-[52px] items-center justify-center">
          <svg viewBox="0 0 18 18" className="size-[18px] fill-none stroke-current" strokeWidth="1.4">
            <path d="M1 1h16v16H1zM1 11h11V1M6 1v10" />
          </svg>
        </button>
      </div>
      <button aria-label="Zoom out" className="mr-[7px] ml-2 h-px w-[10px] bg-[#444]" />
      <input
        type="range"
        aria-label="Zoom"
        className="h-[22px] w-[129px] appearance-none bg-transparent [&::-webkit-slider-runnable-track]:h-[2px] [&::-webkit-slider-runnable-track]:bg-[#444] [&::-webkit-slider-thumb]:-mt-[7px] [&::-webkit-slider-thumb]:h-[15px] [&::-webkit-slider-thumb]:w-[6px] [&::-webkit-slider-thumb]:appearance-none [&::-webkit-slider-thumb]:bg-[#444]"
      />
      <button aria-label="Zoom in" className="mr-[6px] ml-[6px]">
        <svg viewBox="0 0 11 11" className="size-[11px] stroke-current" strokeWidth="1.2">
          <path d="M5.500 0v11M0 5.500h11" />
        </svg>
      </button>
    </footer>
  );
}

/* ---------- taskbar ---------- */

function AppPic({ children }: { children: ReactNode }) {
  return (
    <svg viewBox="0 0 32 32" className="size-[32px]">
      {children}
    </svg>
  );
}

const APPS: { name: string; open?: boolean; active?: boolean; icon: ReactNode }[] = [
  {
    name: 'Task View',
    icon: (
      <AppPic>
        <path d="M7 6v4h12V6M7 26v-4h12v4M7 12h12v8H7zM25 6v5M25 16v10" fill="none" stroke="#fff" strokeWidth="1.300" />
        <path d="M24 12h3v3h-3z" fill="#fff" />
      </AppPic>
    ),
  },
  {
    name: 'File Explorer',
    open: true,
    icon: (
      <AppPic>
        <path d="M2 5h11l2 3h15v19H2z" fill="#e8a713" />
        <path d="M2 10h28v17H2z" fill="#fdd45c" />
        <path d="M7 28V18h18v10h-5v-5h-8v5z" fill="#3a96dd" />
      </AppPic>
    ),
  },
  {
    name: 'Chess board',
    icon: (
      <AppPic>
        <rect x="1" y="1" width="30" height="30" fill="#3c1618" stroke="#140708" />
        <rect x="4" y="4" width="24" height="24" fill="#f3c9c2" />
        {[0, 1, 2, 3, 4, 5].map((r) => (
          <path key={r} d={`M${r % 2 ? 4 : 8} ${6 + r * 4}H28`} stroke="#4a1b1c" strokeWidth="4" strokeDasharray="4 4" />
        ))}
      </AppPic>
    ),
  },
  {
    name: 'Snipping Tool',
    icon: (
      <AppPic>
        <path d="M2 19c0 5 6 6 10 5l1-4z" fill="#9aa0a6" />
        <ellipse cx="14" cy="11" rx="12" ry="7.500" transform="rotate(-30 14 11)" fill="#fff" stroke="#d9463e" strokeWidth="1.500" />
        <path d="M13 3l5 17M23 5l-8 15" stroke="#90979e" strokeWidth="1.500" />
        <circle cx="19" cy="27" r="3" fill="none" stroke="#1f86d1" strokeWidth="2" />
        <circle cx="25" cy="21" r="3" fill="none" stroke="#1f86d1" strokeWidth="2" />
      </AppPic>
    ),
  },
  {
    name: 'Chess',
    icon: (
      <AppPic>
        <path d="M5 31c0-6 4-9 6-12l-6 2-3-4 5-9 1-7 4 4c8-1 13 6 13 26z" fill="#000" />
        <circle cx="23" cy="13" r="4" fill="#fff" />
        <path d="M19 17h8l-2 2 1 7 4 5H16l4-5 1-7z" fill="#fff" />
      </AppPic>
    ),
  },
  {
    name: 'Chrome',
    icon: (
      <AppPic>
        <circle cx="16" cy="16" r="15" fill="#fbc116" />
        <path d="M3 8.500A15 15 0 0129 8.500L16 9.500 11 19z" fill="#e33b2e" />
        <path d="M3 8.500A15 15 0 0015 31l7-11-6 3-6-4z" fill="#2da94f" />
        <circle cx="16" cy="16" r="7" fill="#fff" />
        <circle cx="16" cy="16" r="5.500" fill="#4285f4" />
      </AppPic>
    ),
  },
  {
    name: 'Document viewer',
    icon: (
      <AppPic>
        <path d="M5 2h22v28H5z" fill="#eef3fb" stroke="#7187ae" />
        <path d="M8 5h16v5H8z" fill="#f29a2e" />
        <path d="M8 13h7M8 16h7M8 19h7M18 13h6M18 16h6" stroke="#7f97c9" strokeWidth="1.500" />
        <path d="M8 22h16v5H8z" fill="#6c94db" />
      </AppPic>
    ),
  },
  {
    name: 'Power BI',
    icon: (
      <AppPic>
        <rect x="17" y="1" width="11" height="30" rx="1" fill="#e0a106" />
        <rect x="11" y="9" width="11" height="22" rx="1" fill="#f2c33a" />
        <rect x="4" y="17" width="11" height="14" rx="1" fill="#fbdf6a" />
      </AppPic>
    ),
  },
  {
    name: 'Dashlane',
    icon: (
      <span className="flex size-[32px] items-center justify-center rounded-[4px] border-t-[5px] border-[#cfe9c0] bg-[#59b046] text-[28px] leading-none font-bold text-white">D</span>
    ),
  },
  {
    name: 'Photoshop',
    open: true,
    icon: <span className="flex size-[29px] items-center justify-center rounded-[5px] bg-[#001e36] text-base font-semibold text-[#31a8ff]">Ps</span>,
  },
  {
    name: 'Outlook',
    icon: (
      <AppPic>
        <path d="M9 3h21v15H9z" fill="#1490df" />
        <path d="M16 3h7v7h-7z" fill="#28a8ea" />
        <path d="M23 3h7v7h-7z" fill="#50d9ff" />
        <path d="M9 17l11 6 11-6v12H9z" fill="#1373c4" />
        <path d="M9 29l22-12v12z" fill="#35b8f1" />
        <rect x="1" y="9" width="15" height="15" rx="1" fill="#0a63b7" />
        <ellipse cx="8.500" cy="16.500" rx="3" ry="3.800" fill="none" stroke="#fff" strokeWidth="2" />
      </AppPic>
    ),
  },
  {
    name: 'Seal',
    icon: (
      <span className="flex size-[32px] flex-col items-center">
        <span className="flex h-[25px] w-[25px] shrink-0 items-center justify-center rounded-full bg-[#e9e9e9] text-[20px] leading-none font-bold text-[#a8323b]">S</span>
        <svg viewBox="0 0 24 8" className="h-2 w-6 fill-[#d6d6d6]">
          <path d="M4 0h7L8 8 5 6 1 7zM13 0h7l3 7-4-1-3 2z" />
        </svg>
      </span>
    ),
  },
  {
    name: 'Setup',
    icon: (
      <AppPic>
        <path d="M2 2l22 5-2 17-19-5z" fill="#e9f1f5" />
        <path d="M2 2l22 5v4L2 6z" fill="#8ec1d8" />
        <path d="M15 17l8-4 8 4v10l-8 4-8-4z" fill="#c69a32" />
        <path d="M15 17l8 4v10l-8-4z" fill="#8d6a1d" />
        <path d="M31 13L15 30" stroke="#f3e08a" strokeWidth="2" />
      </AppPic>
    ),
  },
  {
    name: 'Illustrator',
    icon: <span className="flex size-[29px] items-center justify-center rounded-[5px] bg-[#330000] text-base font-semibold text-[#ff9a00]">Ai</span>,
  },
  {
    name: 'Tiles',
    icon: (
      <AppPic>
        <g fill="#eef2fb" stroke="#aab6d6" strokeWidth="1.500">
          <rect x="1" y="2" width="15" height="14" />
          <rect x="16" y="2" width="15" height="14" />
          <rect x="16" y="16" width="15" height="14" />
        </g>
      </AppPic>
    ),
  },
  {
    name: 'Excel',
    open: true,
    active: true,
    icon: (
      <AppPic>
        <path d="M9 3h11v13H9z" fill="#21a366" />
        <path d="M20 3h11v7H20z" fill="#33c481" />
        <path d="M20 10h11v7H20z" fill="#21a366" />
        <path d="M9 17h22v12H9z" fill="#185c37" />
        <path d="M20 17h11v6H20z" fill="#107c41" />
        <rect x="1" y="9" width="15" height="15" rx="1" fill="#107c41" />
        <path d="M6 12.500l5 8M11 12.500l-5 8" stroke="#fff" strokeWidth="2" />
      </AppPic>
    ),
  },
];

const CLOUD = 'M5 17a4.500 4.500 0 01.500-9A6 6 0 0116 6.500 5 5 0 0118 17z';

const TRAY: { name: string; icon: ReactNode }[] = [
  { name: 'Show hidden icons', icon: <path d="M4 14l7-7 7 7" fill="none" stroke="#fff" strokeWidth="1.500" /> },
  {
    name: 'Meet Now',
    icon: <path d="M6 6h7v10H6zM13 10l4-3v8l-4-3M6 3c3-2 5-2 8 0M6 19c3 2 5 2 8 0" fill="none" stroke="#fff" strokeWidth="1.300" />,
  },
  {
    name: 'OneDrive syncing',
    icon: (
      <>
        <path d={CLOUD} fill="#1679d3" />
        <circle cx="16" cy="16" r="5" fill="#fff" />
        <path d="M13 16a3 3 0 015-2M19 16a3 3 0 01-5 2" stroke="#1679d3" fill="none" strokeWidth="1.300" />
      </>
    ),
  },
  {
    name: 'OneDrive',
    icon: (
      <>
        <path d={CLOUD} fill="#0f6cbd" />
        <path d="M3 16l8-6 9 4-2 3H5z" fill="#28a8ea" />
      </>
    ),
  },
  {
    name: 'OneDrive personal',
    icon: (
      <>
        <path d={CLOUD} fill="#a3a6a9" />
        <path d="M3 16l8-6 9 4-2 3H5z" fill="#fff" />
      </>
    ),
  },
  {
    name: 'Battery',
    icon: (
      <>
        <path d="M7 7h14v9H7zM2 3v3h5V3M4 6v6h3" fill="none" stroke="#fff" strokeWidth="1.400" />
        <path d="M9 9h10v5H9z" fill="#fff" />
      </>
    ),
  },
  {
    name: 'Wi-Fi',
    icon: (
      <>
        <path d="M3 18C4 10 9 5 18 4M7 18c1-6 4-9 11-10M11 18c1-3 3-5 7-6" fill="none" stroke="#fff" strokeWidth="1.200" />
        <circle cx="17" cy="17" r="1.500" fill="#fff" />
      </>
    ),
  },
  { name: 'Volume', icon: <path d="M3 8h3l5-5v16l-5-5H3zM13 8c2 2 2 4 0 6M16 6c3 3 3 7 0 10" fill="none" stroke="#fff" strokeWidth="1.300" /> },
];

function Taskbar() {
  return (
    <footer className="flex h-[53px] shrink-0 items-stretch border-t border-[#5b6a70] bg-[#22303a] text-white">
      <button aria-label="Start" className="flex w-[63px] items-center justify-center">
        <svg viewBox="0 0 22 22" className="size-[22px] fill-white">
          <path d="M0 3l9-1.500V10.500H0zM10 1.300L22 0v10.500H10zM0 11.500h9v9L0 19zM10 11.500h12V22l-12-1.500z" />
        </svg>
      </button>
      <label className="flex w-[374px] items-center gap-[14px] border-y-2 border-[#c8c8c8] bg-[#f2f2f2] pl-[14px] text-[#222]">
        <Magnifier className="size-[22px]" />
        <input type="search" aria-label="Windows search" placeholder="Type here to search" className="flex-1 bg-transparent text-[19px] outline-none placeholder:text-[#222]" />
      </label>
      {APPS.map((app) => (
        <button
          key={app.name}
          aria-label={app.name}
          className={clsx('flex w-[65px] flex-col items-center justify-between pt-[11px]', app.active && 'bg-[#515b62]')}
        >
          {app.icon}
          <span className={clsx('h-[3px] bg-[#76b9ed]', app.open ? (app.active ? 'w-full' : 'w-[53px]') : 'w-0')} />
        </button>
      ))}
      <button className="ml-auto flex items-center gap-[9px] text-[17px] whitespace-pre">
        <svg viewBox="0 0 30 30" className="size-[30px]">
          <circle cx="13" cy="16" r="13" fill="#f5a623" />
          <circle cx="25" cy="5" r="4" fill="#c42b1c" />
          <path d="M14 27a4 4 0 010-8 6 6 0 0111 0 4 4 0 011 8z" fill="#b9d4fb" />
        </svg>
        {'19°C  Mostly sunny'}
      </button>
      <div className="ml-[28px] flex items-center">
        {TRAY.map((t) => (
          <button key={t.name} aria-label={t.name} className="flex w-[31px] justify-center">
            <svg viewBox="0 0 22 22" className="size-[22px]">
              {t.icon}
            </svg>
          </button>
        ))}
        <button className="flex w-[32px] flex-col items-center">
          <svg viewBox="0 0 20 8" className="h-2 w-5 fill-white">
            <path d="M1 4l4-3 4 3-4 3zM11 4l4-3 4 3-4 3z" />
          </svg>
          <span className="h-[15px] w-[22px] rounded-sm bg-[#e0142c] text-[11px] leading-[15px] font-bold">10</span>
        </button>
      </div>
      <button className="flex w-[50px] flex-col items-center justify-center text-[15px] leading-6">
        <span>ENG</span>
        <span>UK</span>
      </button>
      <button className="flex w-[96px] flex-col items-center justify-center text-[15px] leading-6">
        <span>17:12</span>
        <span>20/05/2023</span>
      </button>
      <button aria-label="Notifications" className="relative mr-[5px] w-[65px] border-r border-[#7b868c]">
        <svg viewBox="0 0 22 22" className="mb-2 ml-[16px] size-[22px]">
          <path d="M0 1h22v16H11l-5 5v-5H0z" fill="#fff" />
          <path d="M4 6h14M4 9h14M4 12h14" stroke="#22303a" strokeWidth="1.500" />
        </svg>
        <span className="absolute top-[24px] left-[24px] flex size-[25px] items-center justify-center rounded-full border border-[#9a9a9a] bg-[#3f4346] text-[15px] font-semibold">40</span>
      </button>
    </footer>
  );
}

export default function App() {
  return (
    <div className="flex h-screen flex-col overflow-hidden bg-[#e6e6e6] font-['Open_Sans','Noto_Sans',sans-serif]">
      <TitleBar />
      <Ribbon />
      <FormulaBar />
      <main className="flex min-h-0 flex-1">
        <Worksheet />
        <VerticalScroll />
      </main>
      <SheetTabs />
      <StatusBar />
      <Taskbar />
    </div>
  );
}
